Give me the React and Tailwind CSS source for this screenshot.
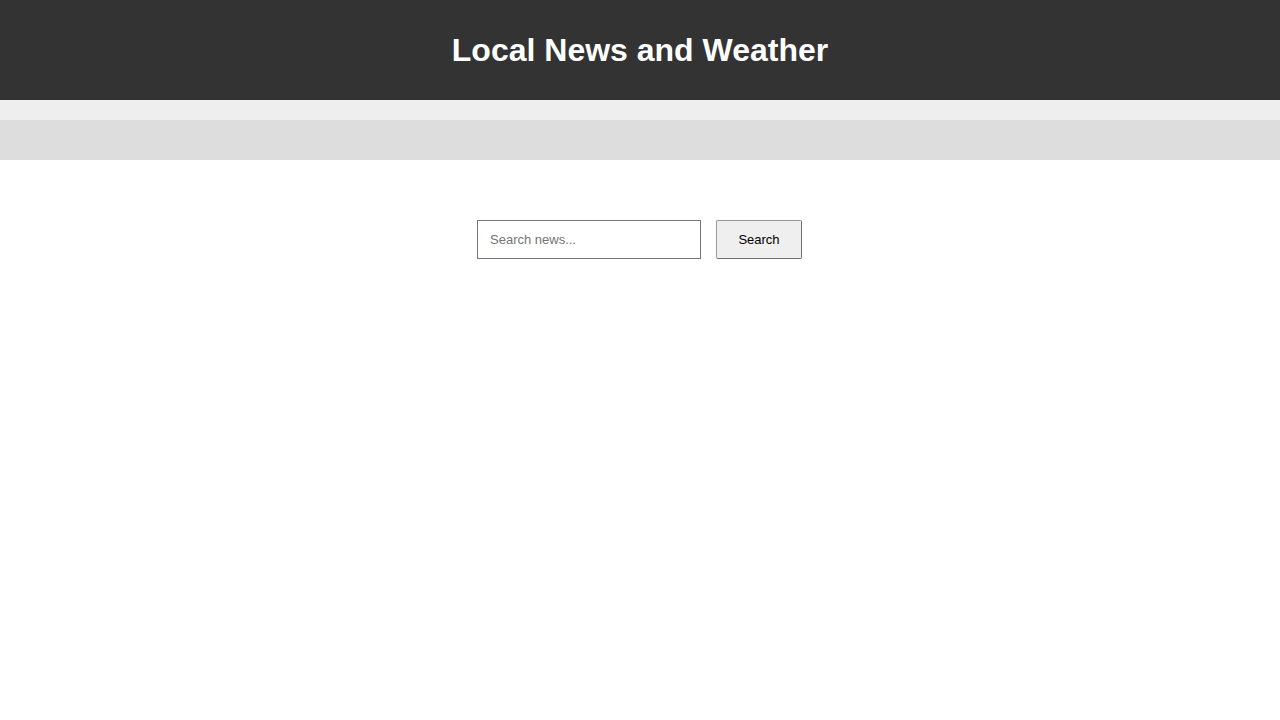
import React from "react";

export default function App() {
  return (
    <div className="min-h-screen bg-white font-['Liberation_Sans',Arial,sans-serif]">
      {/* Header */}
      <header className="h-[100px] bg-[#333333] flex items-center justify-center">
        <h1 className="text-[32px] font-bold text-white leading-none">Local News and Weather</h1>
      </header>

      {/* Nav strip */}
      <div className="pt-[20px] bg-[#eeeeee]">
        <div className="h-[40px] bg-[#dddddd]" />
      </div>

      {/* Search */}
      <main className="pt-[60px] pr-[1px] flex justify-center">
        <form className="flex items-center gap-[15px]" onSubmit={(e) => e.preventDefault()}>
          <input
            type="text"
            placeholder="Search news..."
            className="w-[224px] h-[39px] px-[12px] text-[13px] text-black placeholder:text-[#757575] border border-[#767676] bg-white outline-none"
          />
          <button
            type="submit"
            className="w-[86px] h-[39px] text-[13px] text-black bg-[#efefef] border border-[#9a9a9a] border-r-[#6f6f6f] border-b-[#6f6f6f] rounded-[2px]"
          >
            Search
          </button>
        </form>
      </main>
    </div>
  );
}
